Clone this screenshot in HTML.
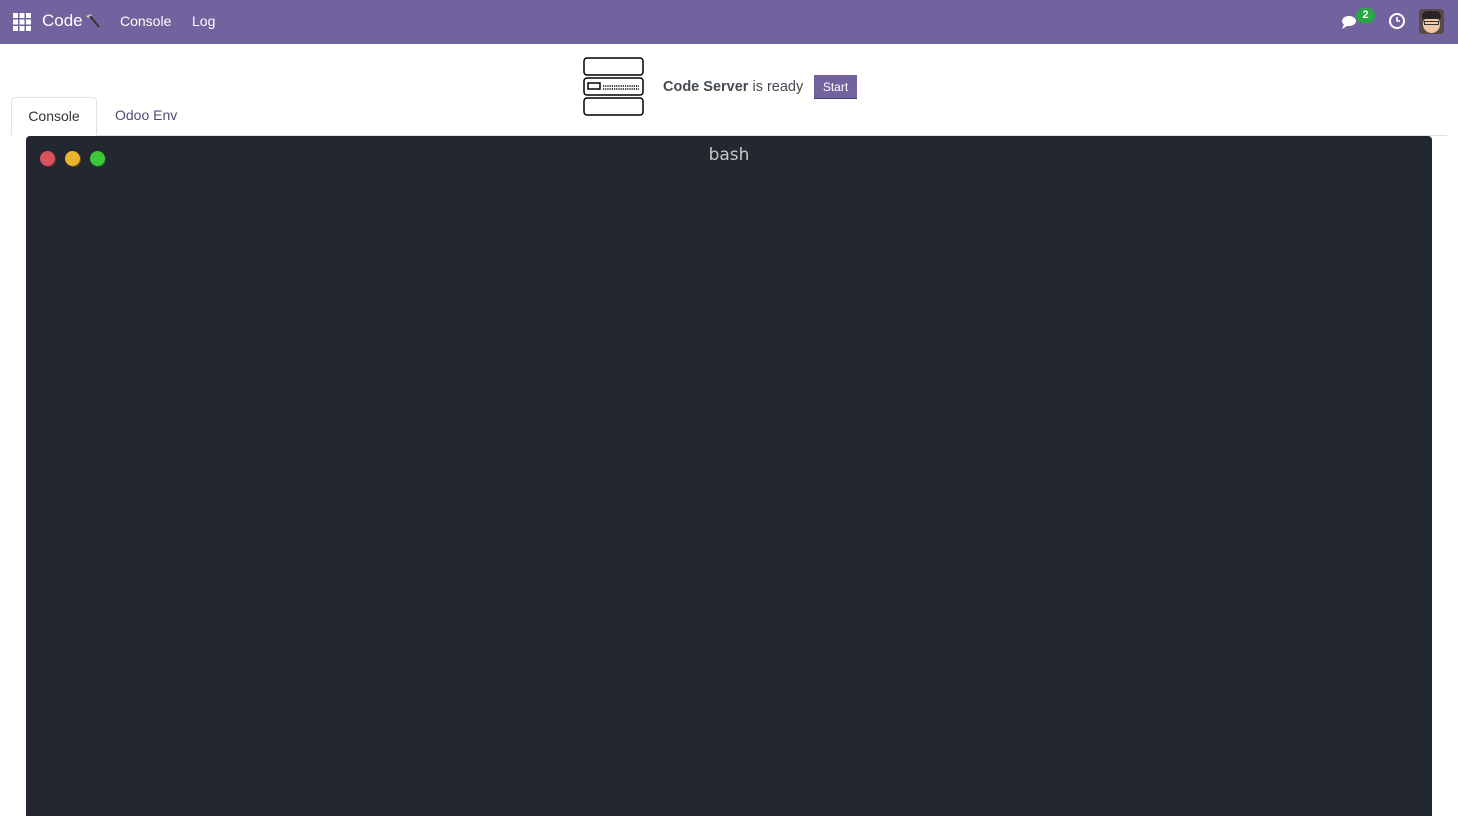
<!DOCTYPE html>
<html><head><meta charset="utf-8"><style>
*{box-sizing:border-box;margin:0;padding:0}
body{width:1458px;height:816px;overflow:hidden;background:#fff;font-family:"Liberation Sans",sans-serif;position:relative}
.nav{position:absolute;left:0;top:0;width:1458px;height:44px;background:#71639e;color:#fff}
.nav .t{position:absolute;top:12px;font-size:15px}
.tab{position:absolute;top:97px;height:39px;font-size:14px;padding-top:10px}
</style></head><body>
<div class="nav">
 <svg style="position:absolute;left:13px;top:13px" width="18" height="18"><g fill="#fff">
 <rect x="0" y="0" width="5" height="5"/><rect x="6.5" y="0" width="5" height="5"/><rect x="13" y="0" width="5" height="5"/>
 <rect x="0" y="6.5" width="5" height="5"/><rect x="6.5" y="6.5" width="5" height="5"/><rect x="13" y="6.5" width="5" height="5"/>
 <rect x="0" y="13" width="5" height="5"/><rect x="6.5" y="13" width="5" height="5"/><rect x="13" y="13" width="5" height="5"/></g></svg>
 <span class="t" style="left:42px;font-size:17px;top:11px">Code</span>
 <svg style="position:absolute;left:83px;top:12px" width="18" height="18"><path d="M3 4 L8 2 L9 4 L5 6Z" fill="#ccc"/><path d="M7 4 L16 15" stroke="#333" stroke-width="2"/></svg>
 <span class="t" style="left:120px;top:13px;font-size:14px">Console</span>
 <span class="t" style="left:192px;top:13px;font-size:14px">Log</span>
 <svg style="position:absolute;left:1341px;top:12px" width="22" height="18"><ellipse cx="8" cy="9" rx="7" ry="5" fill="#fff"/><path d="M3 12 L1 17 L8 13Z" fill="#fff"/></svg>
 <div style="position:absolute;left:1356px;top:8px;width:19px;height:15px;border-radius:8px;background:#28a745;color:#fff;font-size:11px;text-align:center;line-height:15px;font-weight:bold">2</div>
 <svg style="position:absolute;left:1388px;top:12px" width="18" height="18"><circle cx="9" cy="9" r="7" fill="none" stroke="#fff" stroke-width="2"/><path d="M9 5 V9 H12" stroke="#fff" stroke-width="1.6" fill="none"/></svg>
 <div style="position:absolute;left:1419px;top:9px;width:25px;height:25px;border-radius:3px;background:#5a4a48;overflow:hidden">
  <div style="position:absolute;left:4px;top:7px;width:17px;height:17px;border-radius:50%;background:#f1c9a8"></div>
  <div style="position:absolute;left:3px;top:2px;width:19px;height:8px;border-radius:5px 5px 2px 2px;background:#2b2424"></div>
  <div style="position:absolute;left:5px;top:12px;width:15px;height:4px;border:1px solid #333"></div>
 </div>
</div>
<svg style="position:absolute;left:582px;top:56px" width="63" height="62" fill="none" stroke="#000" stroke-width="1.5">
 <rect x="2" y="2" width="59" height="17" rx="3"/><rect x="2" y="22" width="59" height="17" rx="3"/><rect x="2" y="42" width="59" height="17" rx="3"/>
 <rect x="6" y="27" width="12" height="6"/><path d="M21 30 H57" stroke-dasharray="1.2 1"/><path d="M21 33 H57" stroke-dasharray="1.2 1"/>
</svg>
<div style="position:absolute;left:663px;top:79px;font-size:14.5px;color:#444b53"><b>Code Server</b> is ready</div>
<div style="position:absolute;left:814px;top:75px;width:43px;height:24px;background:#71639e;color:#fff;font-size:12px;text-align:center;line-height:24px;border-bottom:1px solid #4c4170">Start</div>
<div style="position:absolute;left:10px;top:135px;width:1437px;height:1px;background:#dee2e6"></div>
<div class="tab" style="left:11px;width:86px;border:1px solid #dee2e6;border-bottom:1px solid #fff;border-radius:4px 4px 0 0;background:#fff;color:#333;text-align:center">Console</div>
<div class="tab" style="left:115px;color:#4f4a7a">Odoo Env</div>
<div style="position:absolute;left:26px;top:136px;width:1406px;height:680px;background:#232830;border-radius:4px 4px 0 0">
 <div style="position:absolute;left:14px;top:15px;width:15px;height:15px;border-radius:50%;background:#d9515c;box-shadow:1px 1px 0 #6b2a2e"></div>
 <div style="position:absolute;left:39px;top:15px;width:15px;height:15px;border-radius:50%;background:#e9b52c;box-shadow:1px 1px 0 #6b5218"></div>
 <div style="position:absolute;left:64px;top:15px;width:15px;height:15px;border-radius:50%;background:#3cc83a;box-shadow:1px 1px 0 #1f5a1f"></div>
 <div style="position:absolute;left:0;width:1406px;top:9px;text-align:center;color:#c8c8c8;font-family:'DejaVu Sans',sans-serif;font-size:17px">bash</div>
</div>
</body></html>
